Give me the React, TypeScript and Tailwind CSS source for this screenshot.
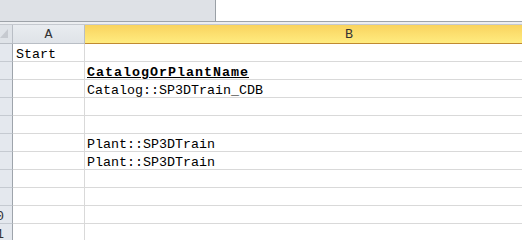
const rows: { a?: string; b?: string; bold?: boolean }[] = [
  { a: 'Start' },
  { b: 'CatalogOrPlantName', bold: true },
  { b: 'Catalog::SP3DTrain_CDB' },
  {},
  {},
  { b: 'Plant::SP3DTrain' },
  { b: 'Plant::SP3DTrain' },
  {},
  {},
  {},
  {},
];

const mono = "font-['Liberation_Mono','DejaVu_Sans_Mono',monospace]";

export default function App() {
  return (
    <div className={`w-[522px] h-[240px] overflow-hidden bg-white ${mono} text-[13.33px] text-black`}>
      {/* formula / name box strip */}
      <div className="flex h-[21px]">
        <div className="w-[216px] bg-[#dee1e6] border-r border-[#9aa0a6]" />
        <div className="flex-1 bg-white" />
      </div>
      <div className="h-px bg-[#9ea3a9]" />
      <div className="h-[3px] bg-[#eceef1] border-b border-[#c5c9cf]" />

      {/* column headers */}
      <div className="flex h-[19px]">
        <div className="w-[13px] bg-[#dfe3e8] border-r border-b border-[#b9bec5] flex items-end">
          <svg width="12" height="18" viewBox="0 0 12 18" className="block">
            <polygon points="0,13 8,4 8,13" fill="#c6cad0" />
          </svg>
        </div>
        <div className="w-[72px] bg-gradient-to-b from-[#e9ecf0] to-[#dfe3e8] border-r border-b border-[#b9bec5] flex items-center justify-center pt-[2px] text-[#333] leading-none">
          A
        </div>
        <div className="flex-1 bg-gradient-to-b from-[#f9d35e] to-[#ffec80] border-b border-[#c08a30] flex items-center justify-start pl-[260px] pt-[2px] text-[#333] leading-none">
          B
        </div>
      </div>

      {/* grid rows */}
      {rows.map((r, i) => (
        <div key={i} className="flex h-[18px]">
          <div className="w-[13px] overflow-hidden bg-[#e4e8ee] border-r border-b border-[#9ea4ab] border-b-[#c5cad1]">
            <div className="ml-[-13px] w-[18px] text-center pt-[4px] leading-[14px] text-[#333]">{i + 1}</div>
          </div>
          <div className="w-[72px] border-r border-b border-[#d9d9d9] pl-[3px] pt-[4px] leading-[14px] whitespace-nowrap">
            {r.a}
          </div>
          <div
            className={`flex-1 border-b border-[#d9d9d9] pl-[2px] pt-[4px] leading-[14px] whitespace-nowrap ${
              r.bold ? 'font-bold underline tracking-[1px]' : ''
            }`}
          >
            {r.b}
          </div>
        </div>
      ))}
    </div>
  );
}
